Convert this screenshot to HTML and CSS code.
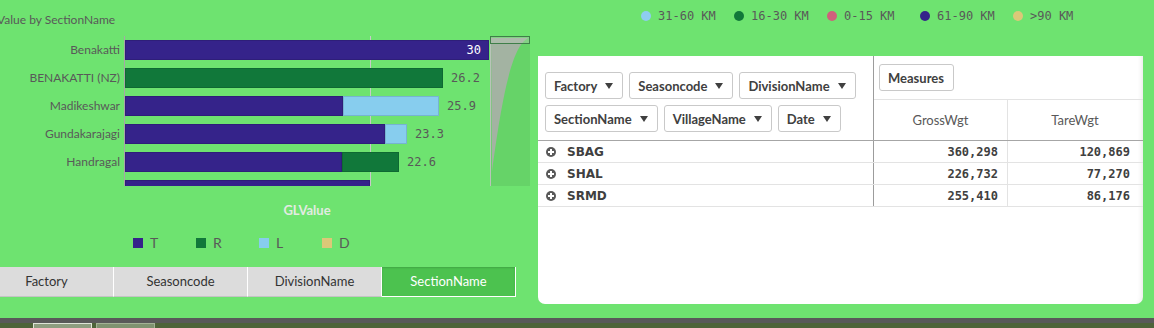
FILE: index.html
```html
<!DOCTYPE html>
<html>
<head>
<meta charset="UTF-8">
<title>Sheet</title>
<link rel="stylesheet" href="styles.css">
</head>
<body>
<div class="main">
	<section class="left">
		<div class="chart-title">Value by SectionName</div>
		<div class="chart">
			<div class="labels">
				<div class="label">Benakatti</div>
				<div class="label">BENAKATTI (NZ)</div>
				<div class="label">Madikeshwar</div>
				<div class="label">Gundakarajagi</div>
				<div class="label">Handragal</div>
			</div>
			<div class="plot">
				<div class="row"><div class="bar"><div class="seg t inside" style="width: 364px">30</div></div></div>
				<div class="row"><div class="bar"><div class="seg r" style="width: 318px"></div></div><span class="val">26.2</span></div>
				<div class="row"><div class="bar"><div class="seg t" style="width: 218px"></div><div class="seg l" style="width: 96px"></div></div><span class="val">25.9</span></div>
				<div class="row"><div class="bar"><div class="seg t" style="width: 260px"></div><div class="seg l" style="width: 22px"></div></div><span class="val">23.3</span></div>
				<div class="row"><div class="bar"><div class="seg t" style="width: 217px"></div><div class="seg r" style="width: 57px"></div></div><span class="val">22.6</span></div>
				<div class="row"><div class="bar"><div class="seg t" style="width: 245px"></div></div></div>
			</div>
			<div class="mini">
				<svg width="40" height="150" viewBox="0 0 40 150">
					<rect x="0" y="0" width="40" height="150" fill="rgba(0,0,0,0.07)"/>
					<line x1="0.5" y1="0" x2="0.5" y2="150" stroke="#b9c4b9"/>
					<path d="M1 2 L38 2 C 24 10, 14 45, 2 136 Z" fill="#a3b3a2"/>
					<rect x="0.5" y="0.5" width="39" height="7" fill="rgba(190,205,190,0.35)" stroke="#3f7f49"/>
				</svg>
			</div>
		</div>
		<div class="axis-title">GLValue</div>
		<div class="legend">
			<div class="leg"><span class="sq t"></span>T</div>
			<div class="leg"><span class="sq r"></span>R</div>
			<div class="leg"><span class="sq l"></span>L</div>
			<div class="leg"><span class="sq d"></span>D</div>
		</div>
		<div class="tabs">
			<div class="tab">Factory</div>
			<div class="tab">Seasoncode</div>
			<div class="tab">DivisionName</div>
			<div class="tab on">SectionName</div>
		</div>
	</section>
	<section class="right">
		<div class="km">
			<div class="km-item"><span class="dot c1"></span>31-60 KM</div>
			<div class="km-item"><span class="dot c2"></span>16-30 KM</div>
			<div class="km-item"><span class="dot c3"></span>0-15 KM</div>
			<div class="km-item"><span class="dot c4"></span>61-90 KM</div>
			<div class="km-item"><span class="dot c5"></span>&gt;90 KM</div>
		</div>
		<div class="panel">
			<div class="pivot-head">
				<div class="dims">
					<div class="dim-row">
						<div class="dim">Factory<span class="caret"></span></div>
						<div class="dim">Seasoncode<span class="caret"></span></div>
						<div class="dim">DivisionName<span class="caret"></span></div>
					</div>
					<div class="dim-row">
						<div class="dim">SectionName<span class="caret"></span></div>
						<div class="dim">VillageName<span class="caret"></span></div>
						<div class="dim">Date<span class="caret"></span></div>
					</div>
				</div>
				<div class="measures">
					<div class="mrow"><div class="dim">Measures</div></div>
					<div class="cols">
						<div class="col">GrossWgt</div>
						<div class="col">TareWgt</div>
					</div>
				</div>
			</div>
			<div class="prow">
				<div class="pdim"><span class="plus"></span>SBAG</div>
				<div class="pv">360,298</div>
				<div class="pv">120,869</div>
			</div>
			<div class="prow">
				<div class="pdim"><span class="plus"></span>SHAL</div>
				<div class="pv">226,732</div>
				<div class="pv">77,270</div>
			</div>
			<div class="prow">
				<div class="pdim"><span class="plus"></span>SRMD</div>
				<div class="pv">255,410</div>
				<div class="pv">86,176</div>
			</div>
		</div>
	</section>
</div>
<div class="status">
	<div class="s-dark"></div>
	<div class="s-olive"><span class="stab first"></span><span class="stab"></span></div>
</div>
</body>
</html>
```

FILE: styles.css
```css
body {
	margin: 0;
	width: 1154px;
	height: 328px;
	overflow: hidden;
	background: #6ee370;
	font-family: Lato, "Open Sans", sans-serif;
	color: #595959;
}
.main {
	display: flex;
	height: 318px;
}
.left {
	width: 538px;
	flex: none;
}
.right {
	flex: 1;
}

/* bar chart */
.chart-title {
	padding-top: 13px;
	margin-left: -3px;
	font-size: 12px;
	line-height: 14px;
	height: 14px;
	white-space: nowrap;
}
.chart {
	display: flex;
	height: 150px;
	margin-top: 9px;
}
.labels {
	width: 124px;
	overflow: hidden;
}
.label {
	height: 28px;
	line-height: 28px;
	text-align: right;
	padding-right: 4px;
	font-size: 12px;
	white-space: nowrap;
}
.plot {
	width: 365px;
	border-left: 1px solid #a7a7a7;
	overflow: hidden;
	background: linear-gradient(#c9c9c9, #c9c9c9) 245px 0 / 1px 100% no-repeat;
}
.row {
	height: 28px;
	display: flex;
	align-items: center;
}
.bar {
	display: flex;
	height: 20px;
}
.seg {
	height: 20px;
	box-shadow: inset 0 0 0 1px rgba(0, 0, 0, 0.12);
}
.t { background: #35238a; }
.r { background: #11783a; }
.l { background: #87cdee; }
.d { background: #dcc878; }
.inside {
	display: flex;
	align-items: center;
	justify-content: flex-end;
	padding-right: 8px;
	box-sizing: border-box;
	color: #fff;
	font: 12px "DejaVu Sans Mono", monospace;
}
.val {
	margin-left: 8px;
	font: 12px "DejaVu Sans Mono", monospace;
	color: #595959;
}
.mini {
	width: 40px;
	height: 150px;
}
.mini svg {
	display: block;
}
.axis-title {
	margin-left: 124px;
	width: 366px;
	margin-top: 17px;
	line-height: 14px;
	text-align: center;
	font-size: 13px;
	font-weight: bold;
	color: #e2ebe2;
}
.legend {
	display: flex;
	margin: 19px 0 0 133px;
	height: 14px;
}
.leg {
	width: 63px;
	display: flex;
	align-items: center;
	font-size: 14px;
	line-height: 14px;
}
.sq {
	width: 10px;
	height: 10px;
	margin-right: 7px;
}

/* tabs */
.tabs {
	display: flex;
	margin: 17px 0 0 -20px;
}
.tab {
	width: 133px;
	height: 29px;
	line-height: 29px;
	text-align: center;
	background: #dcdcdc;
	border-right: 1px solid #fff;
	border-bottom: 1px solid #c4c4c4;
	font-size: 13px;
	color: #333;
}
.tab.on {
	background: #4cc24f;
	color: #fff;
	border-bottom-color: #fff;
	box-shadow: inset 0 1px 2px rgba(0, 0, 0, 0.15);
}

/* km legend */
.km {
	display: flex;
	height: 32px;
	align-items: center;
	padding-left: 103px;
}
.km-item {
	width: 93px;
	display: flex;
	align-items: center;
	font: 12px "DejaVu Sans Mono", monospace;
	color: #595959;
	white-space: nowrap;
}
.dot {
	width: 10px;
	height: 10px;
	border-radius: 50%;
	margin-right: 7px;
}
.c1 { background: #8ecdf0; }
.c2 { background: #11783a; }
.c3 { background: #d0607c; }
.c4 { background: #35238a; }
.c5 { background: #dcc878; }

/* pivot table */
.panel {
	margin-top: 24px;
	width: 605px;
	height: 248px;
	background: #fff;
	border-radius: 0 0 7px 7px;
	box-shadow: inset -5px 0 5px -4px rgba(0, 0, 0, 0.1);
}
.pivot-head {
	display: flex;
	height: 84px;
	border-bottom: 1px solid #a6a6a6;
}
.dims {
	width: 336px;
	border-right: 1px solid #9c9c9c;
	padding: 16px 0 0 7px;
	box-sizing: border-box;
	flex: none;
}
.dim-row {
	display: flex;
	gap: 6px;
	margin-bottom: 6px;
}
.dim {
	height: 27px;
	box-sizing: border-box;
	border: 1px solid #c9c9c9;
	border-radius: 3px;
	padding: 0 9px 0 8px;
	display: flex;
	align-items: center;
	gap: 8px;
	font-size: 13px;
	font-weight: bold;
	color: #404040;
	background: #fff;
}
.caret {
	width: 0;
	height: 0;
	border-top: 6px solid #404040;
	border-left: 4.5px solid transparent;
	border-right: 4.5px solid transparent;
}
.measures {
	flex: 1;
	display: flex;
	flex-direction: column;
}
.mrow {
	height: 44px;
	box-sizing: border-box;
	border-bottom: 1px solid #e3e3e3;
	padding: 8px 0 0 5px;
	display: flex;
	align-items: flex-start;
}
.cols {
	flex: 1;
	display: flex;
}
.col {
	width: 134px;
	box-sizing: border-box;
	border-right: 1px solid #e3e3e3;
	display: flex;
	align-items: center;
	justify-content: center;
	font-size: 13px;
	color: #595959;
}
.col + .col {
	border-right: none;
}
.prow {
	display: flex;
	height: 22px;
	box-sizing: border-box;
	border-bottom: 1px solid #e3e3e3;
}
.pdim {
	width: 336px;
	flex: none;
	box-sizing: border-box;
	border-right: 1px solid #9c9c9c;
	display: flex;
	align-items: center;
	padding-left: 8px;
	font: bold 12px "DejaVu Sans", sans-serif;
	color: #404040;
}
.plus {
	width: 10px;
	height: 10px;
	border-radius: 50%;
	margin-right: 11px;
	background:
		linear-gradient(#fff, #fff) center / 6px 2px no-repeat,
		linear-gradient(#fff, #fff) center / 2px 6px no-repeat,
		#595959;
}
.pv {
	width: 134px;
	box-sizing: border-box;
	border-right: 1px solid #e3e3e3;
	display: flex;
	align-items: center;
	justify-content: flex-end;
	padding-right: 9px;
	font: bold 12px "DejaVu Sans Mono", monospace;
	color: #404040;
}
.pv + .pv {
	width: 133px;
	padding-right: 11px;
	border-right: none;
}

/* bottom strip */
.status {
	height: 10px;
}
.s-dark {
	height: 5px;
	background: #595959;
}
.s-olive {
	height: 5px;
	background: #4e6339;
	display: flex;
	align-items: flex-end;
	padding-left: 33px;
	gap: 4px;
}
.stab {
	width: 57px;
	height: 4px;
	background: #7f9270;
	border: 1px solid #a3b295;
	border-bottom: none;
}
.stab.first {
	background: #8e9d80;
	border-color: #dfe5d8;
}
```
